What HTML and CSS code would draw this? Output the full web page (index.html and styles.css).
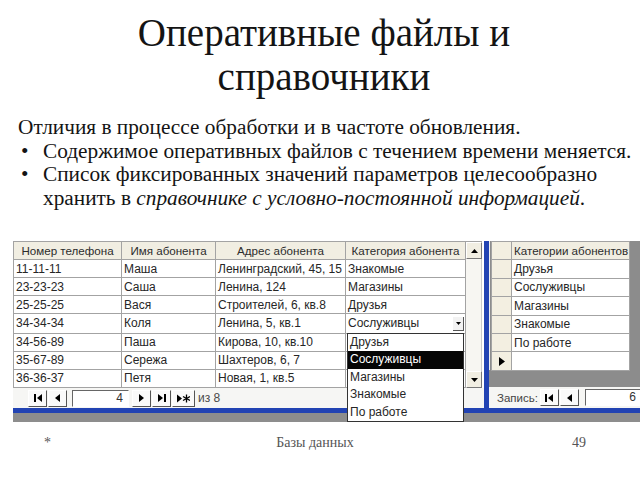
FILE: index.html
```html
<!DOCTYPE html>
<html lang="ru">
<head>
<meta charset="utf-8">
<title>Оперативные файлы и справочники</title>
<link rel="stylesheet" href="styles.css">
</head>
<body>
<div class="slide">
  <h1 class="title">Оперативные файлы и<br>справочники</h1>
  <div class="text">
    <p class="lead">Отличия в процессе обработки и в частоте обновления.</p>
    <ul class="points">
      <li><span>Содержимое оперативных файлов с течением времени меняется.</span></li>
      <li><span>Список фиксированных значений параметров целесообразно хранить в <em>справочнике с условно-постоянной информацией</em>.</span></li>
    </ul>
  </div>

  <div class="shot">
    <div class="wins">
      <div class="win win-left">
        <div class="win-main">
          <div class="grid-area">
            <table class="grid grid-left">
              <colgroup><col class="c1"><col class="c2"><col class="c3"><col class="c4"></colgroup>
              <thead>
                <tr><th>Номер телефона</th><th>Имя абонента</th><th>Адрес абонента</th><th>Категория абонента</th></tr>
              </thead>
              <tbody>
                <tr><td>11-11-11</td><td>Маша</td><td>Ленинградский, 45, 15</td><td>Знакомые</td></tr>
                <tr><td>23-23-23</td><td>Саша</td><td>Ленина, 124</td><td>Магазины</td></tr>
                <tr><td>25-25-25</td><td>Вася</td><td>Строителей, 6, кв.8</td><td>Друзья</td></tr>
                <tr><td>34-34-34</td><td>Коля</td><td>Ленина, 5, кв.1</td><td class="combo"><span>Сослуживцы</span><span class="combo-btn"><svg width="5" height="3" viewBox="0 0 5 3"><path d="M0 0H5L2.5 3Z"/></svg></span></td></tr>
                <tr><td>34-56-89</td><td>Паша</td><td>Кирова, 10, кв.10</td><td></td></tr>
                <tr><td>35-67-89</td><td>Сережа</td><td>Шахтеров, 6, 7</td><td></td></tr>
                <tr><td>36-36-37</td><td>Петя</td><td>Новая, 1, кв.5</td><td></td></tr>
              </tbody>
            </table>
            <div class="vscroll">
              <div class="sbtn"><svg width="7" height="4" viewBox="0 0 7 4"><path d="M0 4H7L3.5 0Z"/></svg></div>
              <div class="track"></div>
              <div class="sbtn"><svg width="7" height="4" viewBox="0 0 7 4"><path d="M0 0H7L3.5 4Z"/></svg></div>
            </div>
            <div class="gutter"></div>
          </div>
          <div class="nav nav-left">
            <span class="nbtn"><svg width="8" height="8" viewBox="0 0 8 8"><rect width="2" height="8"/><path d="M8 0L3 4L8 8Z"/></svg></span>
            <span class="nbtn"><svg width="5" height="8" viewBox="0 0 5 8"><path d="M5 0L0 4L5 8Z"/></svg></span>
            <span class="nfield">4</span>
            <span class="nbtn"><svg width="5" height="8" viewBox="0 0 5 8"><path d="M0 0L5 4L0 8Z"/></svg></span>
            <span class="nbtn"><svg width="8" height="8" viewBox="0 0 8 8"><path d="M0 0L5 4L0 8Z"/><rect x="6" width="2" height="8"/></svg></span>
            <span class="nbtn nbtn-wide"><svg width="13" height="9" viewBox="0 0 13 9"><path d="M0 0.5L5 4.5L0 8.5Z"/><path d="M9.5 0.5V8.5M6 2.5L13 6.5M6 6.5L13 2.5" stroke="#000" stroke-width="1.3" fill="none"/></svg></span>
            <span class="nof">из 8</span>
          </div>
        </div>
        <ul class="dropdown">
          <li>Друзья</li>
          <li class="sel">Сослуживцы</li>
          <li>Магазины</li>
          <li>Знакомые</li>
          <li>По работе</li>
        </ul>
      </div>

      <div class="win win-right">
        <div class="grid-area-r">
          <table class="grid grid-right">
            <colgroup><col class="sel-col"><col class="cat-col"></colgroup>
            <thead><tr><th class="rsel"></th><th class="left">Категории абонентов</th></tr></thead>
            <tbody>
              <tr><td class="rsel"></td><td>Друзья</td></tr>
              <tr><td class="rsel"></td><td>Сослуживцы</td></tr>
              <tr><td class="rsel"></td><td>Магазины</td></tr>
              <tr><td class="rsel"></td><td>Знакомые</td></tr>
              <tr><td class="rsel"></td><td>По работе</td></tr>
              <tr><td class="rsel"><svg width="6" height="9" viewBox="0 0 6 9"><path d="M0 0L6 4.5L0 9Z"/></svg></td><td></td></tr>
            </tbody>
          </table>
        </div>
        <div class="nav nav-right">
          <span class="nlabel">Запись:</span>
          <span class="nbtn"><svg width="8" height="8" viewBox="0 0 8 8"><rect width="2" height="8"/><path d="M8 0L3 4L8 8Z"/></svg></span>
          <span class="nbtn"><svg width="5" height="8" viewBox="0 0 5 8"><path d="M5 0L0 4L5 8Z"/></svg></span>
          <span class="nfield nfield-r">6</span>
        </div>
      </div>
    </div>
    <div class="desktop"></div>
  </div>

  <footer class="foot">
    <span class="f-left">*</span>
    <span class="f-mid">Базы данных</span>
    <span class="f-right">49</span>
  </footer>
</div>
</body>
</html>
```

FILE: styles.css
```css
html, body {
  margin: 0;
  padding: 0;
  background: #fff;
}

.slide {
  width: 640px;
  height: 480px;
  overflow: hidden;
  background: #fff;
  color: #141414;
  font-family: "Liberation Serif", "Times New Roman", serif;
}

.title {
  margin: 0;
  padding: 11px 0 0 8px;
  font-size: 39px;
  line-height: 44px;
  font-weight: normal;
  text-align: center;
}

.text {
  margin-top: 17px;
  padding-left: 18px;
  font-size: 21.3px;
  line-height: 23.5px;
}

.lead {
  margin: 0;
}

.points {
  margin: 0;
  padding: 0;
  list-style: none;
  width: 622px;
}

.points li {
  display: flex;
}

.points li::before {
  content: "\2022";
  flex: 0 0 22px;
  padding-left: 3px;
}

.points li > span {
  flex: 1;
}

.points em {
  font-style: italic;
}

/* ---------- screenshot of the database windows ---------- */
.shot {
  margin: 31px 0 0 13px;
  width: 627px;
  height: 181px;
  display: flex;
  flex-direction: column;
  font-family: "Liberation Sans", Arial, sans-serif;
  font-size: 12px;
  color: #262626;
}

.wins {
  display: flex;
  height: 172px;
}

.desktop {
  flex: 1;
  background: #8d8d8d;
}

.win {
  display: flex;
  flex-direction: column;
}

.win-left {
  position: relative;
  width: 476px;
  flex: none;
  border-right: 5px solid #2243b3;
  box-sizing: border-box;
}

.win-main {
  display: flex;
  flex-direction: column;
  flex: 1;
  border-bottom: 5px solid #2243b3;
}

.grid-area {
  display: flex;
  height: 147px;
}

.grid {
  border-collapse: collapse;
  table-layout: fixed;
  background: #fff;
}

.grid-left {
  width: 452px;
  height: 147px;
}

.c1 { width: 108px; }
.c2 { width: 94px; }
.c3 { width: 130px; }
.c4 { width: 120px; }

.grid th,
.grid td {
  border: 1px solid #a3a3a3;
  padding: 0 0 0 2px;
  white-space: nowrap;
  overflow: hidden;
  text-align: left;
  font-weight: normal;
  line-height: 14px;
}

.grid th {
  background: #f1eee2;
  text-align: center;
  height: 17px;
  padding: 0;
  font-size: 11.6px;
  color: #2c2c2c;
}

.grid th.left {
  text-align: left;
  padding-left: 2px;
}

.grid td.combo {
  padding-right: 1px;
}

.combo-btn {
  float: right;
  width: 11px;
  height: 14px;
  margin-top: 1px;
  box-sizing: border-box;
  border-right: 1px solid #555;
  border-bottom: 1px solid #555;
  background: #f2f2f2;
  display: flex;
  align-items: center;
  justify-content: center;
}

.vscroll {
  width: 17px;
  display: flex;
  flex-direction: column;
  border-top: 1px solid #a3a3a3;
  box-sizing: border-box;
}

.sbtn {
  height: 17px;
  flex: none;
  box-sizing: border-box;
  background: #f1eee2;
  border: 1px solid #fff;
  border-right-color: #777;
  border-bottom-color: #777;
  display: flex;
  align-items: center;
  justify-content: center;
}

.track {
  flex: 1;
  background: #f7f6f2;
  border-right: 1px solid #c9c9c9;
}

.gutter {
  width: 2px;
  background: #fff;
}

.nav {
  display: flex;
  align-items: center;
  background: #f6f6f4;
  font-size: 12px;
  color: #4a4a4a;
}

.nav-left {
  height: 20px;
  padding-left: 15px;
}

.nbtn {
  width: 19px;
  height: 17px;
  flex: none;
  box-sizing: border-box;
  display: flex;
  align-items: center;
  justify-content: center;
  border: 1px solid #fff;
  border-right-color: #555;
  border-bottom-color: #555;
  background: #fafafa;
  margin-right: 1px;
}

.nbtn-wide {
  width: 23px;
}

.nfield {
  width: 57px;
  height: 17px;
  flex: none;
  box-sizing: border-box;
  border: 1px solid #fff;
  border-top-color: #666;
  border-left-color: #666;
  background: #fff;
  text-align: right;
  padding-right: 5px;
  line-height: 15px;
  margin: 0 3px 0 4px;
  color: #333;
}

.nof {
  margin-left: 2px;
}

.dropdown {
  position: absolute;
  left: 334px;
  top: 92px;
  width: 117px;
  height: 89px;
  margin: 0;
  padding: 0;
  list-style: none;
  box-sizing: border-box;
  border: 1px solid #333;
  background: #fff;
  display: flex;
  flex-direction: column;
  z-index: 2;
}

.dropdown li {
  flex: 1;
  padding-left: 2px;
  line-height: 17px;
  color: #262626;
}

.dropdown li.sel {
  background: #050505;
  color: #fff;
}

.win-right {
  flex: 1;
  min-width: 0;
  border-bottom: 5px solid #2243b3;
  background: #8c8c8c;
}

.grid-area-r {
  height: 129px;
  padding-left: 1px;
  background: #8c8c8c;
  border-left: 1px solid #f0f0f0;
}

.grid-right {
  width: 138px;
}

.sel-col { width: 20px; }
.cat-col { width: 118px; }

.grid-right th,
.grid-right td {
  height: 17.4px;
}

.grid-right .rsel {
  background: #f3efe1;
  padding: 0;
  text-align: center;
  vertical-align: middle;
}

.grid-right .rsel svg {
  display: block;
  margin: 0 auto;
}

.nav-right {
  margin-top: auto;
  height: 21px;
  padding-left: 8px;
}

.nlabel {
  margin-right: 2px;
  color: #444;
  font-size: 11.5px;
}

.nfield-r {
  width: 56px;
  margin-left: 5px;
  margin-right: 0;
  padding-right: 4px;
}

/* ---------- footer ---------- */
.foot {
  margin-top: 13px;
  display: grid;
  grid-template-columns: 1fr auto 1fr;
  padding: 0 54px 0 44px;
  font-size: 14px;
  line-height: 16px;
  color: #555;
}

.f-right {
  text-align: right;
}
```
